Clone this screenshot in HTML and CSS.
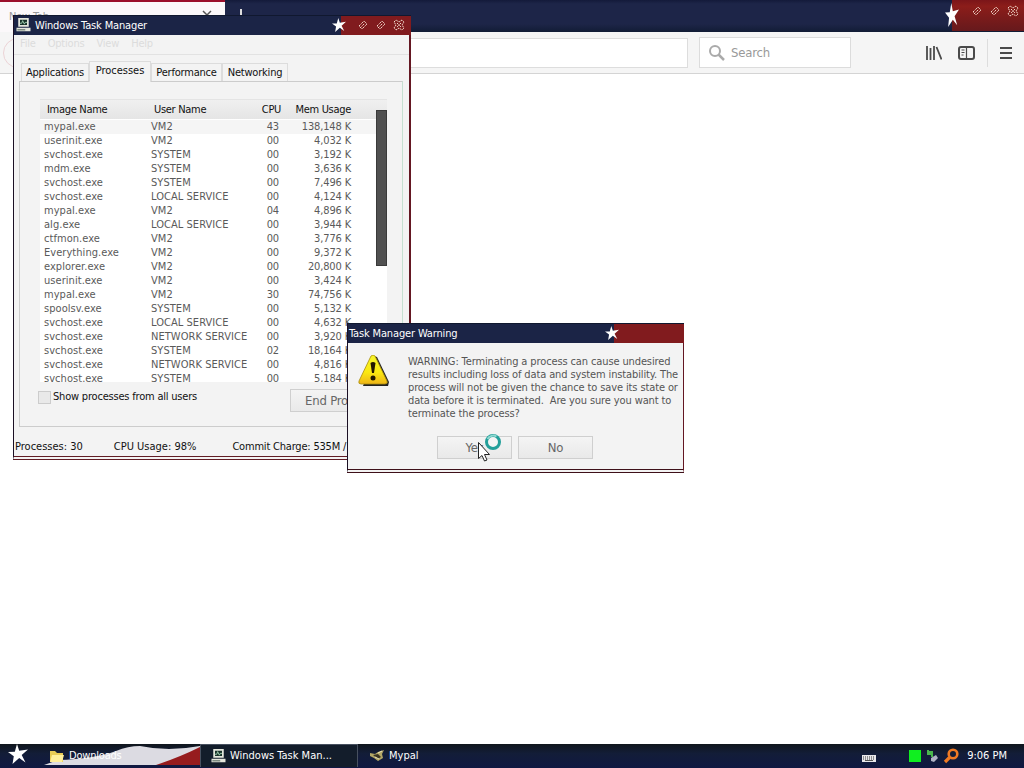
FILE: index.html
```
<!DOCTYPE html>
<html lang="en">
<head>
    <meta charset="UTF-8">
    <title>Windows Task Manager</title>
    <link rel="stylesheet" href="styles.css">
</head>
<body>
<svg class="defs" width="0" height="0">
    <symbol id="star" viewBox="0 0 20 20" preserveAspectRatio="none"><path fill="#fff" d="M9 0l2.200 6.800 8.800-1.300-6.300 5.500 3.800 7.500-6.300-4.600L4.500 20l1.300-7.800L0 8l6.800-.3z"/></symbol>
    <symbol id="pin" viewBox="0 0 12 12"><path d="M2 7l5-5 3 3-5 5zM4.500 7.500l3-3" fill="none" stroke="#f4dccf" stroke-dasharray="1.500 .7"/></symbol>
    <symbol id="cross" viewBox="0 0 12 12"><path d="M1 3l2-2 3 2 3-2 2 2-2 3 2 3-2 2-3-2-3 2-2-2 2-3zM4 4l4 4M8 4l-4 4" fill="none" stroke="#f4dccf" stroke-dasharray="1.500 .7"/></symbol>
    <symbol id="pc" viewBox="0 0 16 16"><path fill="#e4e6dc" d="M2 0h12v10H2zM0 11h16v4H0z"/><path fill="#173128" d="M4 2h8v6H4zM1 13h9v1H1z"/><path d="M4 6h2l1-3 2 4 1-2h2" fill="none" stroke="#a8d8b8"/></symbol>
</svg>

<div class="browser">
    <div class="titlebar">
        <div class="tab"><span>New Tab</span><svg width="10" height="10"><path d="M1 1l8 8M9 1L1 9" stroke="#555" stroke-width="1.500"/></svg></div>
        <div class="newtab"></div>
        <svg class="star"><use href="#star"/></svg>
        <div class="controls">
            <svg width="12" height="12"><use href="#pin"/></svg>
            <svg width="12" height="12"><use href="#pin"/></svg>
            <svg width="12" height="12"><use href="#cross"/></svg>
        </div>
    </div>
    <div class="toolbar">
        <div class="back"></div>
        <div class="url"></div>
        <div class="search">
            <svg width="18" height="18"><circle cx="7" cy="7" r="5" fill="none" stroke="#aaa" stroke-width="2"/><path d="M10.500 10.500L16 16" stroke="#aaa" stroke-width="2.500"/></svg>
            <span>Search</span>
        </div>
        <div class="tools">
            <svg width="16" height="14"><path d="M1 0v14M4.500 2v12M8 0v14M10.500 1l5 12.500" stroke="#4a4a4a" stroke-width="1.800"/></svg>
            <svg width="17" height="14"><rect x="1" y="1" width="15" height="12" rx="2" fill="none" stroke="#4a4a4a" stroke-width="2"/><path d="M8.500 1v12M3.500 4h3M3.500 6.500h3M3.500 9h2" stroke="#4a4a4a" stroke-width="1.200"/></svg>
            <i></i>
            <svg width="12" height="12"><path d="M0 1h12M0 6h12M0 11h12" stroke="#4a4a4a" stroke-width="2"/></svg>
        </div>
    </div>
</div>

<div class="window taskmgr">
    <div class="caption">
        <svg class="app" width="15" height="14"><use href="#pc"/></svg>
        <span class="name">Windows Task Manager</span>
        <svg class="star"><use href="#star"/></svg>
        <div class="controls">
            <svg width="12" height="12"><use href="#pin"/></svg>
            <svg width="12" height="12"><use href="#pin"/></svg>
            <svg width="12" height="12"><use href="#cross"/></svg>
        </div>
    </div>
    <div class="menu"><span>File</span><span>Options</span><span>View</span><span>Help</span></div>
    <div class="tabs">
        <div class="t1">Applications</div><div class="t2 on">Processes</div><div class="t3">Performance</div><div class="t4">Networking</div>
    </div>
    <div class="panel">
        <div class="list">
            <div class="row head"><span>Image Name</span><span>User Name</span><span>CPU</span><span>Mem Usage</span></div>
            <div class="scroll"></div>
            <div class="rows">
                <div class="row sel"><span>mypal.exe</span><span>VM2</span><span>43</span><span>138,148 K</span></div>
                <div class="row"><span>userinit.exe</span><span>VM2</span><span>00</span><span>4,032 K</span></div>
                <div class="row"><span>svchost.exe</span><span>SYSTEM</span><span>00</span><span>3,192 K</span></div>
                <div class="row"><span>mdm.exe</span><span>SYSTEM</span><span>00</span><span>3,636 K</span></div>
                <div class="row"><span>svchost.exe</span><span>SYSTEM</span><span>00</span><span>7,496 K</span></div>
                <div class="row"><span>svchost.exe</span><span>LOCAL SERVICE</span><span>00</span><span>4,124 K</span></div>
                <div class="row"><span>mypal.exe</span><span>VM2</span><span>04</span><span>4,896 K</span></div>
                <div class="row"><span>alg.exe</span><span>LOCAL SERVICE</span><span>00</span><span>3,944 K</span></div>
                <div class="row"><span>ctfmon.exe</span><span>VM2</span><span>00</span><span>3,776 K</span></div>
                <div class="row"><span>Everything.exe</span><span>VM2</span><span>00</span><span>9,372 K</span></div>
                <div class="row"><span>explorer.exe</span><span>VM2</span><span>00</span><span>20,800 K</span></div>
                <div class="row"><span>userinit.exe</span><span>VM2</span><span>00</span><span>3,424 K</span></div>
                <div class="row"><span>mypal.exe</span><span>VM2</span><span>30</span><span>74,756 K</span></div>
                <div class="row"><span>spoolsv.exe</span><span>SYSTEM</span><span>00</span><span>5,132 K</span></div>
                <div class="row"><span>svchost.exe</span><span>LOCAL SERVICE</span><span>00</span><span>4,632 K</span></div>
                <div class="row"><span>svchost.exe</span><span>NETWORK SERVICE</span><span>00</span><span>3,920 K</span></div>
                <div class="row"><span>svchost.exe</span><span>SYSTEM</span><span>02</span><span>18,164 K</span></div>
                <div class="row"><span>svchost.exe</span><span>NETWORK SERVICE</span><span>00</span><span>4,816 K</span></div>
                <div class="row"><span>svchost.exe</span><span>SYSTEM</span><span>00</span><span>5,184 K</span></div>
            </div>
        </div>
        <div class="under">
            <label><i class="check"></i>Show processes from all users</label>
            <div class="btn end">End Process</div>
        </div>
    </div>
    <div class="status"><span>Processes: 30</span><span>CPU Usage: 98%</span><span class="commit">Commit Charge: 535M /</span></div>
</div>

<div class="window warning">
    <div class="caption">
        <span class="name">Task Manager Warning</span>
        <svg class="star"><use href="#star"/></svg>
        <div class="controls"></div>
    </div>
    <div class="message">
        <svg width="32" height="32" viewBox="0 0 32 32">
            <defs><linearGradient id="yel" x1="0" y1="0" x2="0" y2="1"><stop offset="0" stop-color="#f6f52a"/><stop offset=".6" stop-color="#fbe810"/><stop offset="1" stop-color="#eeb418"/></linearGradient></defs>
            <path d="M16 1l3 1 12 25-1 4H5z" fill="#222"/>
            <path d="M13 1q2-2 4 0l12 25q1 3-2 3H3q-3 0-2-3z" fill="url(#yel)" stroke="#a88d0c" stroke-width=".8"/>
            <path d="M12.500 8q2.500-2 5 0l-1.500 10h-2z" fill="#221600"/><circle cx="15" cy="23" r="2.500" fill="#221600"/>
        </svg>
        <p>WARNING: Terminating a process can cause undesired<br>results including loss of data and system instability. The<br>process will not be given the chance to save its state or<br>data before it is terminated.&nbsp; Are you sure you want to<br>terminate the process?</p>
    </div>
    <div class="buttons"><div class="btn">Yes</div><div class="btn">No</div></div>
</div>

<svg class="cursor" width="28" height="32" viewBox="0 0 28 32">
    <circle cx="16" cy="10" r="6.500" fill="#f4f4f4" stroke="#239f9a" stroke-width="3"/>
    <path d="M10.500 7a6.500 6.500 0 0 1 9-2.500" fill="none" stroke="#8fd8d0" stroke-width="2"/>
    <path d="M1.500 10.500v16l3.500-3 2.500 5.500 2.500-1-2.500-5.500h5z" fill="#fff" stroke="#222"/>
</svg>

<div class="taskbar">
    <svg class="start" width="20" height="20"><use href="#star"/></svg>
    <div class="task flag">
        <svg class="stripes" width="156" height="20"><path d="M0 20L14 15Q50 14 72 6Q84 1 96 1Q124 7 156 1V10L120 20z" fill="#dcdbe2"/><path d="M112 20Q136 12 156 2V20z" fill="#961c1e"/></svg>
        <svg class="folder" width="16" height="14"><path d="M1 2h5l2 2h6v9H1z" fill="#e8cc55"/><path d="M3 6h12l-2 7H1z" fill="#fff09a"/></svg>
        <span>Downloads</span>
    </div>
    <div class="task active"><svg width="15" height="14"><use href="#pc"/></svg><span>Windows Task Man...</span></div>
    <div class="task mypal">
        <svg width="15" height="13"><path d="M0 4l5 1 3-2 6-2-2 4 1 4-5 3-4-3-4-2z" fill="#b3a766"/><path d="M3 6l5-1 3 3-3 2z" fill="#3a3422"/><path d="M8 4l4-2M5 8l4 2" stroke="#eee7bb"/></svg>
        <span>Mypal</span>
    </div>
    <div class="tray">
        <svg class="kbd" width="14" height="7"><path d="M0 0h14v7H0z" fill="#e8e8ea"/><path d="M1 2h12M1 4h12" stroke="#333" stroke-dasharray="1 1"/><path d="M3 5.500h8" stroke="#555"/></svg>
        <i class="green"></i>
        <svg class="plug" width="13" height="14"><path d="M2 1v4h4M2 3h4v5" fill="none" stroke="#49b84d" stroke-width="2"/><path d="M5 9l5-3 2 3-4 4-3-1z" fill="#b0b3c6"/></svg>
        <svg width="16" height="16"><circle cx="10" cy="6" r="4.300" fill="none" stroke="#f07a24" stroke-width="2.600"/><path d="M6.500 9.500L2 14" stroke="#f07a24" stroke-width="3.200"/></svg>
        <span class="clock">9:06 PM</span>
    </div>
</div>
</body>
</html>
```
FILE: styles.css
```
*{box-sizing: border-box;}
body{margin: 0;width: 1024px;height: 768px;overflow: hidden;background: #fff;font: 11px/14px "DejaVu Sans Condensed","DejaVu Sans",sans-serif;letter-spacing: -.2px;color: #111;position: relative;white-space: nowrap;}
svg{display: block;flex: none;}
.defs{position: absolute;}

/* browser behind */
.titlebar{display: flex;height: 32px;background: linear-gradient(#131a3a,#1d2548 12%,#1d2548 75%,#111c35);}
.tab{width: 225px;background: #fbf8fa;border-top: 2px solid #9b0f2c;padding: 8px 13px 0 9px;display: flex;justify-content: space-between;color: #999;}
.newtab{width: 2px;height: 12px;margin: 9px 0 0 15px;background: #ddd;}
.titlebar .star{width: 14px;height: 24px;margin: 3px -7px 0 auto;z-index: 1;}
.titlebar .controls{width: 72px;height: 31px;background: linear-gradient(#7b1519,#8c1d1a 20%,#66191c);display: flex;gap: 6px;padding: 5px 0 0 19px;}
.toolbar{display: flex;align-items: center;height: 42px;background: #f5f5f5;border-bottom: 1px solid #d4d4d4;}
.back{width: 30px;height: 30px;border: 1px solid #ecd3d6;border-radius: 50%;margin-left: 3px;}
.url{width: 649px;height: 30px;margin-left: 6px;background: #fff;border: 1px solid #ddd;}
.search{width: 152px;height: 31px;margin-left: 11px;background: #fff;border: 1px solid #dcdcdc;display: flex;align-items: center;gap: 5px;padding-left: 8px;font: 13px "DejaVu Sans Condensed",sans-serif;color: #999;}
.tools{display: flex;align-items: center;margin-left: 75px;gap: 16px;}
.tools i{width: 1px;height: 28px;background: #ddd;margin: 0 -4px 0 -4px;}

/* windows */
.window{position: absolute;background: #f3f3f3;border: 1px solid #1b1024;border-top: 0;border-right: 2px solid #641722;}
.caption{display: flex;align-items: center;background: #1b2446;border-top: 1px solid #10182f;color: #fff;height: 20px;margin-right: -2px;letter-spacing: -.15px;}
.caption .star{margin: 0 -5px 2px auto;z-index: 1;width: 14px;height: 14px;}
.caption .controls{height: 19px;background: #811b1e;display: flex;align-items: center;gap: 6px;padding-bottom: 2px;}
.taskmgr{left: 13px;top: 15px;width: 398px;height: 445px;border-bottom: 4px double #611c24;}
.taskmgr .caption .app{margin: 0 4px 2px 2px;}
.taskmgr .controls{width: 70px;padding-left: 16px;}
.menu{display: flex;gap: 12px;height: 20px;padding: 2px 0 0 6px;border-bottom: 1px solid #e2e2e2;color: #dcdcdc;}
.tabs{display: flex;align-items: flex-end;height: 26px;padding-left: 7px;}
.tabs div{height: 18px;border: 1px solid #dcdcdc;border-bottom: 0;text-align: center;line-height: 18px;}
.tabs .on{height: 21px;background: #f3f3f3;margin-bottom: -1px;letter-spacing: 0;}
.t1{width: 68px;}
.t2{width: 62px;}
.t3{width: 71px;}
.t4{width: 66px;}
.panel{height: 346px;margin: 0 6px 0 5px;border: 1px solid #ccc;border-right-color: #c5dfd1;padding: 17px 0 0 20px;}
.list{width: 347px;height: 283px;background: #fff;border-top: 1px solid #e4e4e4;overflow: hidden;position: relative;}
.row{display: grid;grid-template-columns: 107px 84px 44px 72px;padding-left: 4px;height: 14px;line-height: 14px;color: #5a5a5a;letter-spacing: .05px;}
.row span:nth-child(n+3){text-align: right;letter-spacing: -.15px;}
.row.head{height: 19px;line-height: 19px;background: linear-gradient(#f0f0f0,#e5e5e5);color: #111;grid-template-columns: 107px 83px 44px 70px;padding-left: 7px;letter-spacing: -.3px;}
.row.head span:nth-child(n+3){letter-spacing: -.3px;}
.rows{padding-top: 1px;width: 336px;}
.row.sel{background: #f5f5f5;}
.scroll{position: absolute;right: 0;top: 10px;width: 11px;height: 156px;background: #505050;border: 1px solid #3a3a3a;}
.under{display: flex;justify-content: space-between;padding: 7px 10px 0 0;}
.under label{display: flex;height: 16px;align-items: center;margin-left: -2px;}
.check{width: 13px;height: 13px;background: #e9e9e9;border: 1px solid #ccc;margin-right: 2px;}
.btn{width: 75px;height: 23px;border: 1px solid #cfcfcf;background: linear-gradient(#f4f4f4,#e9e9e9);text-align: center;font-size: 13px;line-height: 22px;color: #666;}
.end{width: 88px;margin-right: 14px;padding-left: 14px;text-align: left;}
.status{display: flex;height: 30px;align-items: center;padding: 9px 0 0 1px;gap: 31px;letter-spacing: 0;}
.commit{margin-left: 5px;letter-spacing: -.2px;}

.warning{left: 347px;top: 323px;width: 337px;height: 150px;border-right-width: 1px;border-bottom: 4px double #3e1019;}
.warning .caption{margin-right: -1px;padding-left: 1px;}
.warning .controls{width: 70px;}
.message{display: flex;padding: 12px 0 0 10px;gap: 18px;}
.message p{margin: 0;line-height: 13px;color: #555;letter-spacing: -.12px;}
.buttons{display: flex;gap: 6px;padding: 16px 0 0 89px;}
.cursor{position: absolute;left: 477px;top: 432px;}

/* taskbar */
.taskbar{position: absolute;left: 0;right: 0;top: 744px;height: 24px;display: flex;background: linear-gradient(#10161d,#131d38 40%,#101842);color: #fff;}
.start{margin: 0 16px 0 8px;}
.task{display: flex;align-items: center;height: 23px;gap: 4px;}
.flag{width: 156px;position: relative;padding-left: 5px;}
.stripes{position: absolute;left: 0;top: 1px;}
.folder,.flag span{position: relative;}
.active{width: 158px;padding-left: 10px;border: 1px solid #47505f;border-width: 1px 1px 0;background: #131d2b;letter-spacing: 0;}
.mypal{padding-left: 12px;letter-spacing: 0;}
.tray{display: flex;align-items: center;margin-left: auto;padding-right: 17px;}
.kbd{margin: 4px 33px 0 0;}
.green{width: 12px;height: 12px;background: #10ef20;margin-right: 5px;}
.plug{margin-right: 4px;}
.clock{margin-left: 8px;letter-spacing: 0;}
```
